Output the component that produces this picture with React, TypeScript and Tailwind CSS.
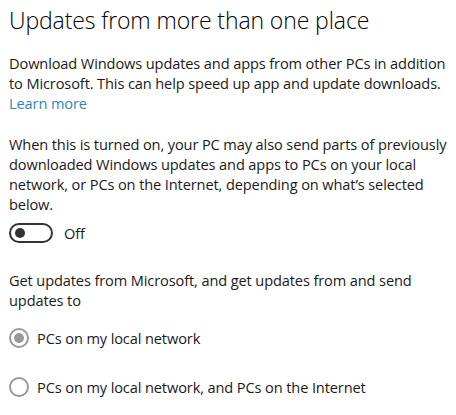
import React from 'react';

export default function App() {
  return (
    <div className="min-h-screen w-[456px] bg-white pl-[9px] pt-0 text-[#1a1a1a] font-['Open_Sans',sans-serif]">
      {/* Title */}
      <h1 className="h-[40px] text-[23px] leading-[40px] font-light text-black tracking-[-0.1px]">
        Updates from more than one place
      </h1>

      {/* Intro */}
      <p className="mt-[13px] w-[440px] text-[14.6px] leading-[20px] tracking-[-0.12px]">
        Download Windows updates and apps from other PCs in addition to Microsoft. This can help speed up app and update downloads.
        <br />
        <a href="#" className="text-[#2d87c4]">Learn more</a>
      </p>

      <p className="mt-[21px] w-[440px] text-[14.6px] leading-[20px] tracking-[-0.12px]">
        When this is turned on, your PC may also send parts of previously downloaded Windows updates and apps to PCs on your local network, or PCs on the Internet, depending on what’s selected below.
      </p>

      {/* Toggle */}
      <div className="mt-[9px] flex h-[20px] items-center gap-[11px]">
        <div className="flex h-[20px] w-[44px] items-center rounded-full border-2 border-[#333] pl-[4px]">
          <div className="h-[10px] w-[10px] rounded-full bg-[#333]" />
        </div>
        <span className="text-[14.6px] leading-[20px] tracking-[-0.12px]">Off</span>
      </div>

      <p className="mt-[27px] w-[420px] text-[14.6px] leading-[20px] tracking-[-0.12px]">
        Get updates from Microsoft, and get updates from and send updates to
      </p>

      {/* Radios */}
      <div className="mt-[18px] flex flex-col gap-[29px]">
        <label className="flex h-[20px] items-center gap-[8px]">
          <span className="flex h-[20px] w-[20px] items-center justify-center rounded-full border-2 border-[#999]">
            <span className="h-[10px] w-[10px] rounded-full bg-[#999]" />
          </span>
          <span className="text-[14.6px] leading-[20px] tracking-[-0.12px]">PCs on my local network</span>
        </label>
        <label className="flex h-[20px] items-center gap-[8px]">
          <span className="h-[20px] w-[20px] rounded-full border-2 border-[#999]" />
          <span className="text-[14.6px] leading-[20px] tracking-[-0.12px]">PCs on my local network, and PCs on the Internet</span>
        </label>
      </div>
    </div>
  );
}
